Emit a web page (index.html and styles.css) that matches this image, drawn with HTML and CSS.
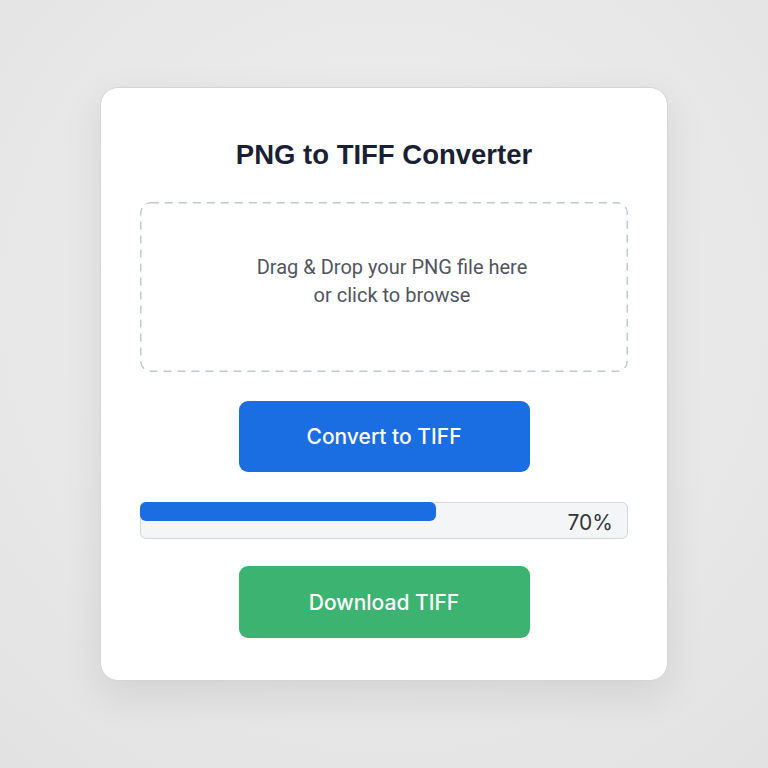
FILE: index.html
```html
<!DOCTYPE html>
<html lang="en">
<head>
    <meta charset="UTF-8">
    <meta name="viewport" content="width=device-width, initial-scale=1.0">
    <title>PNG to TIFF Converter</title>
    <link rel="stylesheet" href="styles.css">
</head>
<body>

    <div class="card">
        <h1>PNG to TIFF Converter</h1>
        <label class="drop-zone" for="fileInput">
            Drag &amp; Drop your PNG file here<br>or click to browse
        </label>
        <input type="file" id="fileInput" accept="image/png" hidden>
        <button class="btn convert-btn">Convert to TIFF</button>
        <div class="progress">
            <div class="progress-fill" style="width: 61%"></div>
            <span class="progress-label">70%</span>
        </div>
        <button class="btn download-btn">Download TIFF</button>
    </div>

</body>
</html>
```

FILE: styles.css
```css
* { box-sizing: border-box; }
body {
    margin: 0;
    height: 768px;
    display: flex;
    align-items: center;
    justify-content: center;
    background: radial-gradient(circle at 50% 40%, #f0f0f0, #e2e2e2);
    font-family: "Liberation Sans", Arial, sans-serif;
}
.card {
    width: 568px;
    height: 594px;
    padding: 51px 39px 0;
    background: #fff;
    border: 1px solid #d4d4d4;
    border-radius: 18px;
    box-shadow: 0 14px 40px rgba(0, 0, 0, 0.09);
    display: flex;
    flex-direction: column;
    align-items: center;
}
h1 {
    margin: 0 0 31px;
    font-size: 27.5px;
    line-height: 32px;
    font-weight: 700;
    color: #1a1f36;
}
/* dashed outline drawn as svg so the dash length can be set */
.drop-zone {
    width: 100%;
    height: 170px;
    padding: 0 0 12px 16px;
    background: url("data:image/svg+xml,%3Csvg xmlns='http://www.w3.org/2000/svg' width='100%25' height='100%25'%3E%3Crect x='0.75' y='0.75' width='calc(100%25 - 1.5px)' height='calc(100%25 - 1.5px)' rx='10' fill='none' stroke='%23bccad2' stroke-width='1.5' stroke-dasharray='8 6'/%3E%3C/svg%3E");
    border-radius: 10px;
    display: flex;
    align-items: center;
    justify-content: center;
    text-align: center;
    font-family: Roboto, sans-serif;
    font-size: 20px;
    line-height: 28px;
    color: #51555f;
    cursor: pointer;
}
.btn {
    width: 291px;
    height: 71px;
    border: none;
    border-radius: 9px;
    color: #fff;
    font-family: Inter, sans-serif;
    font-size: 21px;
    font-weight: 500;
    cursor: pointer;
}
.convert-btn { background: #1b6de2; margin-top: 29px; }
.download-btn { background: #3db372; margin-top: 27px; height: 72px; }
.progress {
    position: relative;
    width: 100%;
    height: 37px;
    margin-top: 30px;
    background: #f4f5f7;
    border: 1px solid #d3d7dd;
    border-radius: 6px;
}
.progress-fill {
    height: 19px;
    margin: -1px 0 0 -1px;
    background: #1b6de2;
    border-radius: 6px;
}
.progress-label {
    position: absolute;
    right: 14px;
    bottom: 3px;
    font-family: Inter, sans-serif;
    font-size: 21px;
    color: #33363c;
}
```
